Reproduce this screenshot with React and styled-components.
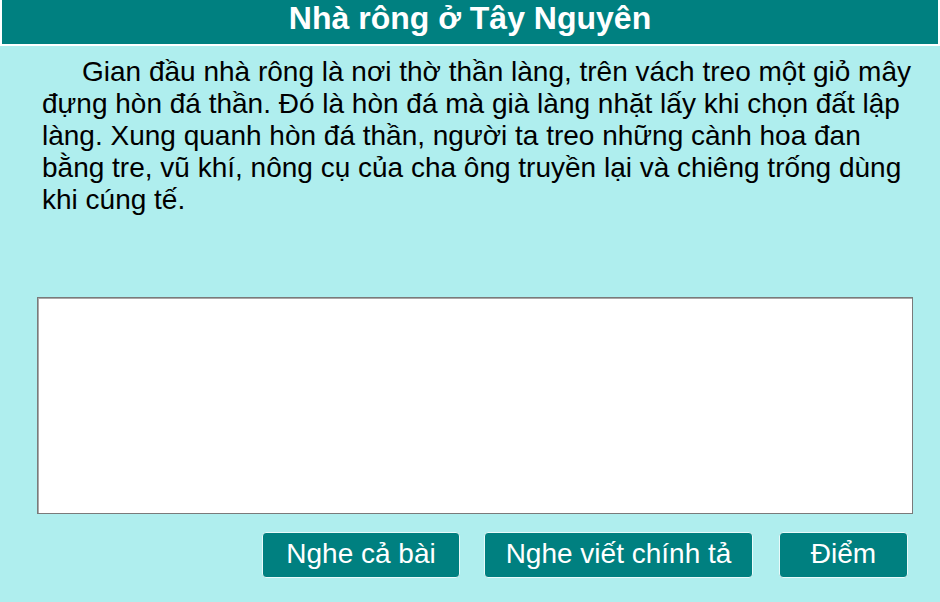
import React from "react";
import styled, { createGlobalStyle } from "styled-components";

const GlobalStyle = createGlobalStyle`
  html, body {
    margin: 0;
    padding: 0;
    background: #afeeee;
  }
  body {
    font-family: "Liberation Sans", Arial, sans-serif;
  }
`;

const Page = styled.div`
  width: 940px;
  height: 602px;
  background: #afeeee;
  display: flex;
  flex-direction: column;
  overflow: hidden;
`;

const TitleBar = styled.h1`
  margin: 0;
  height: 44px;
  box-sizing: content-box;
  background: #008080;
  border: 2px solid #ffffff;
  border-top: none;
  color: #ffffff;
  font-size: 32px;
  font-weight: bold;
  line-height: 37px;
  text-align: center;
`;

const Passage = styled.p`
  margin: 10px 20px 0 42px;
  font-size: 28px;
  line-height: 32px;
  text-indent: 40px;
  color: #000000;
`;

const Answer = styled.textarea`
  display: block;
  box-sizing: border-box;
  margin: 81px 0 0 37px;
  width: 876px;
  height: 217px;
  border: 1px solid #7a7a7a;
  box-shadow: inset 1px 1px 0 #a9a9a9;
  background: #ffffff;
  resize: none;
  outline: none;
  font-family: "Liberation Sans", Arial, sans-serif;
  font-size: 24px;
`;

const Actions = styled.div`
  display: flex;
  justify-content: flex-end;
  gap: 24px;
  margin: 18px 32px 0 0;
`;

const ActionButton = styled.button`
  box-sizing: border-box;
  width: ${(p) => p.$w}px;
  height: 46px;
  margin-left: ${(p) => p.$gap || 0}px;
  padding: 0 0 3px;
  background: #008080;
  border: 1px solid #e8fafa;
  border-radius: 4px;
  color: #ffffff;
  font-family: "Liberation Sans", Arial, sans-serif;
  font-size: 28px;
  line-height: 40px;
  cursor: pointer;
`;

export default function App() {
  return (
    <Page>
      <GlobalStyle />
      <TitleBar>Nhà rông ở Tây Nguyên</TitleBar>
      <Passage>
        Gian đầu nhà rông là nơi thờ thần làng, trên vách treo một giỏ mây
        đựng hòn đá thần. Đó là hòn đá mà già làng nhặt lấy khi chọn đất lập
        làng. Xung quanh hòn đá thần, người ta treo những cành hoa đan bằng
        tre, vũ khí, nông cụ của cha ông truyền lại và chiêng trống dùng khi
        cúng tế.
      </Passage>
      <Answer />
      <Actions>
        <ActionButton $w={198}>Nghe cả bài</ActionButton>
        <ActionButton $w={269}>Nghe viết chính tả</ActionButton>
        <ActionButton $w={129} $gap={2}>Điểm</ActionButton>
      </Actions>
    </Page>
  );
}
